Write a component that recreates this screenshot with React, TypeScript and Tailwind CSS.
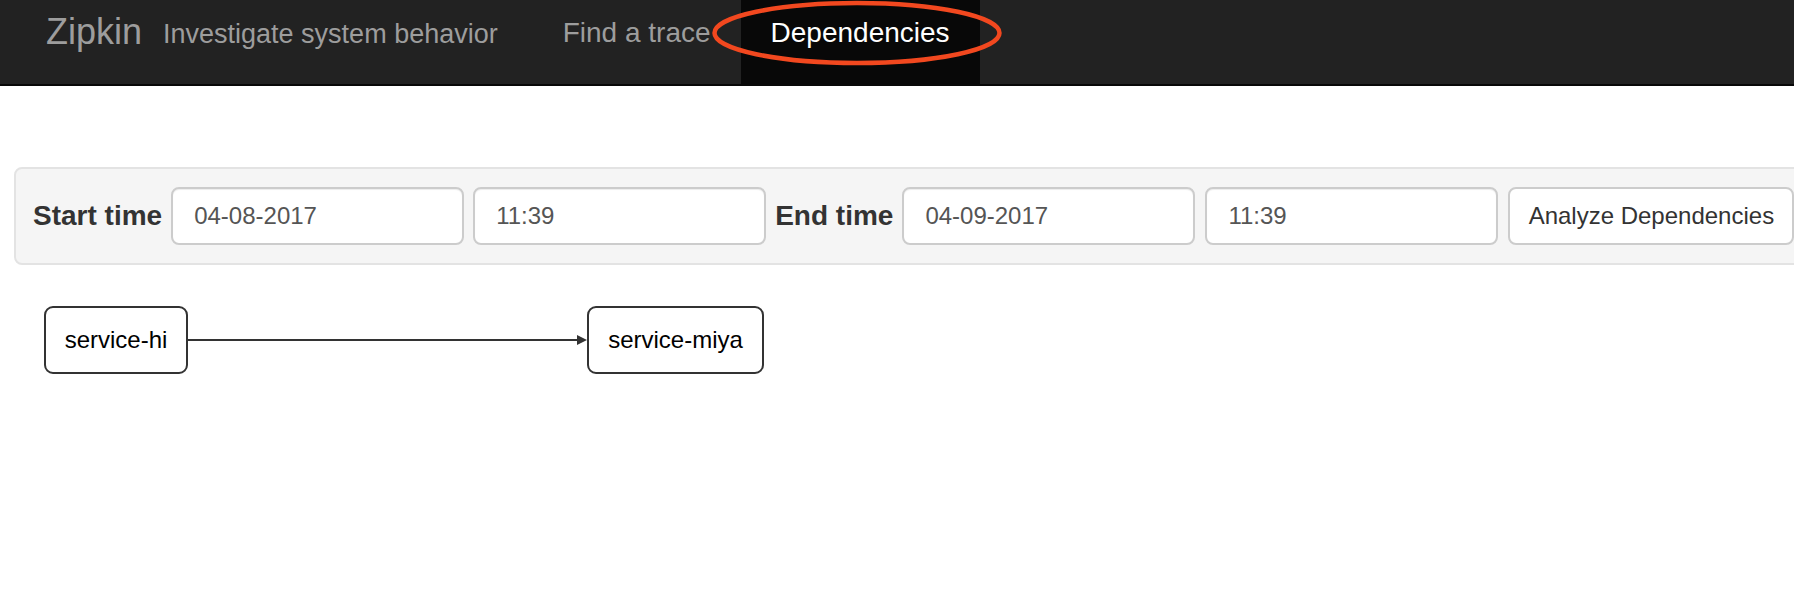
import React from 'react';

const font = { fontFamily: '"Liberation Sans", Arial, sans-serif' };

function NavBar() {
  return (
    <div className="relative flex h-[86px] items-start border-b-2 border-[#080808] bg-[#222222] pl-[46px]">
      <span className="pt-[12px] text-[36px] leading-[40px] text-[#9d9d9d]">Zipkin</span>
      <span className="ml-[21px] pt-[14px] text-[27px] leading-[40px] text-[#9d9d9d]">
        Investigate system behavior
      </span>
      <ul className="ml-[35px] flex h-full">
        <li className="h-full px-[30px] pt-[13px] text-[28px] leading-[40px] text-[#9d9d9d]">Find a trace</li>
        <li className="h-full bg-[#080808] px-[30px] pt-[13px] text-[28px] leading-[40px] text-white">
          Dependencies
        </li>
      </ul>
      {/* highlight drawn over the active tab */}
      <svg className="absolute left-[711px] top-0" width="292" height="70" viewBox="0 0 292 70">
        <ellipse cx="146" cy="33" rx="142.5" ry="30" fill="none" stroke="#f2481f" strokeWidth="4.5" />
      </svg>
    </div>
  );
}

function Field({ value }: { value: string }) {
  return (
    <input
      readOnly
      value={value}
      className="h-[58px] w-[293px] shrink-0 rounded-[8px] border-2 border-[#cccccc] bg-white pl-[21px] text-[24px] text-[#555555] shadow-[inset_0_1px_1px_rgba(0,0,0,0.075)] outline-none"
      style={font}
    />
  );
}

function Node({ label, width }: { label: string; width: string }) {
  return (
    <div
      className={`flex h-[68px] shrink-0 items-center justify-center rounded-[9px] border-2 border-[#333333] bg-white text-[24px] text-black ${width}`}
    >
      {label}
    </div>
  );
}

export default function App() {
  return (
    <div className="min-h-[590px] w-full overflow-hidden bg-white" style={font}>
      <NavBar />

      <div className="ml-[14px] mt-[81px] flex w-[1810px] items-center gap-[9px] rounded-[8px] border-2 border-[#e3e3e3] bg-[#f5f5f5] py-[18px] pl-[17px]">
        <label className="shrink-0 text-[28px] font-bold text-[#333333]">Start time</label>
        <Field value="04-08-2017" />
        <Field value="11:39" />
        <label className="shrink-0 text-[28px] font-bold text-[#333333]">End time</label>
        <div className="flex gap-[10px]">
          <Field value="04-09-2017" />
          <Field value="11:39" />
          <button className="h-[58px] w-[286px] shrink-0 rounded-[8px] border-2 border-[#cccccc] bg-white text-[24px] text-[#333333]">
            Analyze Dependencies
          </button>
        </div>
      </div>

      <div className="ml-[44px] mt-[41px] flex items-center">
        <Node label="service-hi" width="w-[144px]" />
        <svg width="399" height="68" viewBox="0 0 399 68" className="shrink-0">
          <line x1="0" y1="34" x2="392" y2="34" stroke="#333333" strokeWidth="2" />
          <path d="M389 29 L399 34 L389 39 Z" fill="#333333" />
        </svg>
        <Node label="service-miya" width="w-[177px]" />
      </div>
    </div>
  );
}
